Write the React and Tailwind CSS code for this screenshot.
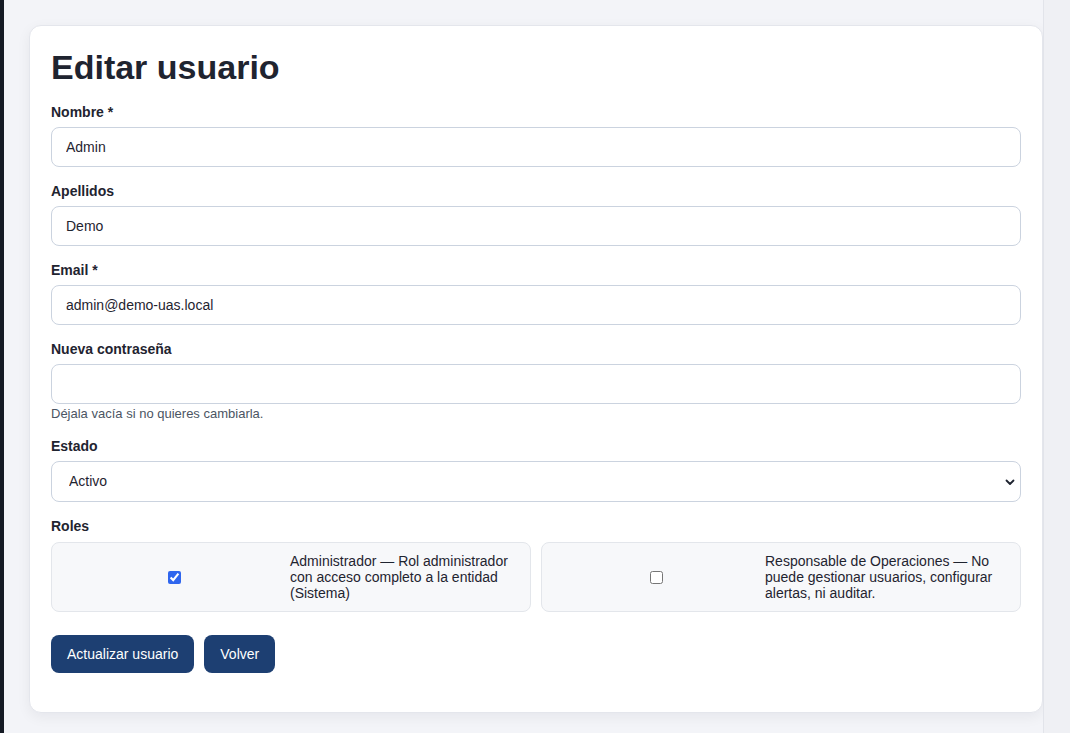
import React from "react";

function Label({ children, mb = "mb-[5px]" }) {
  return (
    <label className={`block pt-[2px] text-[14px] leading-[20px] font-bold text-[#1f2430] ${mb}`}>{children}</label>
  );
}

function Field({ label, children }) {
  return (
    <div className="mb-3">
      <Label>{label}</Label>
      {children}
    </div>
  );
}

function TextInput({ value, type = "text" }) {
  return (
    <input
      type={type}
      defaultValue={value}
      className="block w-full h-[40px] rounded-[8px] border border-[#cbd3df] bg-white px-[14px] text-[14px] text-[#1f2430] outline-none"
    />
  );
}

function RoleCard({ checked, boxW, text }) {
  return (
    <label className="flex-1 flex items-center gap-[6px] rounded-[8px] border border-[#e3e6eb] bg-[#f7f8fa] px-3 py-[10px]">
      <span className={`flex justify-center shrink-0 ${boxW}`}>
        <input
          type="checkbox"
          defaultChecked={checked}
          className="w-[13px] h-[13px] m-0 accent-[#2f66ee]"
        />
      </span>
      <span className="flex-1 text-[14px] leading-[16px] text-[#1f2430]">{text}</span>
    </label>
  );
}

export default function App() {
  return (
    <div
      className="flex w-[1070px] h-[733px] overflow-hidden bg-[#f3f4f8]"
      style={{ fontFamily: '"Liberation Sans", Arial, Helvetica, sans-serif' }}
    >
      <div className="w-[4px] shrink-0 bg-[#151a24]" />
      <div className="w-[1039px] shrink-0 pl-[25px] pt-[25px]">
        <div className="w-[1014px] h-[688px] rounded-[12px] border border-[#e4e6ec] bg-white px-[21px] pt-[21px] shadow-[0_4px_14px_rgba(15,23,42,0.06)]">
          <h1 className="text-[34px] leading-[41px] font-bold text-[#1f2430] mb-3">Editar usuario</h1>

          <Field label="Nombre *">
            <TextInput value="Admin" />
          </Field>
          <Field label="Apellidos">
            <TextInput value="Demo" />
          </Field>
          <Field label="Email *">
            <TextInput value="admin@demo-uas.local" />
          </Field>
          <div className="mb-3">
            <Label>Nueva contraseña</Label>
            <TextInput value="" type="password" />
            <p className="mt-[2px] text-[13px] leading-[16px] text-[#4b5563]">Déjala vacía si no quieres cambiarla.</p>
          </div>
          <Field label="Estado">
            <div className="relative">
              <select className="block w-full h-[41px] appearance-none rounded-[8px] border border-[#cbd3df] bg-white pl-[17px] pr-8 text-[14px] text-[#1f2430] outline-none">
                <option>Activo</option>
                <option>Inactivo</option>
              </select>
              <svg
                className="pointer-events-none absolute right-[6px] top-1/2 -translate-y-1/2"
                width="10"
                height="8"
                viewBox="0 0 10 8"
                fill="none"
              >
                <path d="M1.5 2.5 L5 6 L8.5 2.5" stroke="#1f2430" strokeWidth="1.8" strokeLinecap="round" strokeLinejoin="round" />
              </svg>
            </div>
          </Field>
          <div>
            <Label mb="mb-[6px]">Roles</Label>
            <div className="flex gap-[10px]">
              <RoleCard
                checked
                boxW="w-[220px]"
                text="Administrador — Rol administrador con acceso completo a la entidad (Sistema)"
              />
              <RoleCard
                checked={false}
                boxW="w-[205px]"
                text="Responsable de Operaciones — No puede gestionar usuarios, configurar alertas, ni auditar."
              />
            </div>
          </div>

          <div className="flex gap-[10px] mt-[23px]">
            <button className="h-[38px] rounded-[8px] bg-[#1d3f72] px-4 text-[14px] text-white">Actualizar usuario</button>
            <button className="h-[38px] rounded-[8px] bg-[#1d3f72] px-4 text-[14px] text-white">Volver</button>
          </div>
        </div>
      </div>
      <div className="flex-1 border-l border-[#e2e4ea] bg-[#eff0f4]" />
    </div>
  );
}
